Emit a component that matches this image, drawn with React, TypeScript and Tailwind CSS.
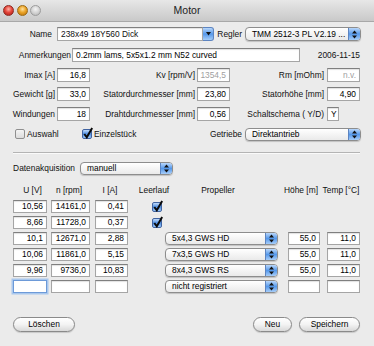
import React from "react";

// Aqua-style controls, sized for the scaled-down window

function Field({
  w,
  value = "",
  left = false,
  disabled = false,
  focus = false,
  h = "h-[14px]",
}: {
  w: string;
  value?: string;
  left?: boolean;
  disabled?: boolean;
  focus?: boolean;
  h?: string;
}) {
  return (
    <div
      className={`${w} ${h} shrink-0 bg-white border flex items-center leading-none whitespace-nowrap overflow-hidden ${
        left ? "justify-start pl-[3px]" : "justify-end pr-[3px]"
      } ${disabled ? "text-[#a0a0a0]" : "text-black"} ${
        focus
          ? "border-[#6d9ad8] shadow-[0_0_0_1.5px_#a9c8ee]"
          : "border-[#a5a5a5] border-t-[#7f7f7f] shadow-[inset_0_1px_1px_rgba(0,0,0,0.12)]"
      }`}
    >
      {value}
    </div>
  );
}

function UpDown() {
  return (
    <svg width="5" height="9" viewBox="0 0 5 9">
      <polygon points="0,3.6 2.5,0.6 5,3.6" fill="#111" />
      <polygon points="0,5.4 2.5,8.4 5,5.4" fill="#111" />
    </svg>
  );
}

function Popup({ w, value, h = "h-[14px]" }: { w: string; value: string; h?: string }) {
  return (
    <div
      className={`${w} ${h} shrink-0 flex items-stretch rounded-[4px] border border-[#8d8d8d] bg-gradient-to-b from-white to-[#eaeaea] shadow-[0_1px_1px_rgba(0,0,0,0.18)] overflow-hidden`}
    >
      <span className="flex-1 flex items-center pl-[6px] leading-none whitespace-nowrap overflow-hidden text-black">
        {value}
      </span>
      <span className="w-[12px] flex items-center justify-center border-l border-[#5d84c0] bg-gradient-to-b from-[#b9d7fa] via-[#5598ea] to-[#a6cdf8]">
        <UpDown />
      </span>
    </div>
  );
}

function Combo({ w, value }: { w: string; value: string }) {
  return (
    <div className={`${w} h-[14px] shrink-0 flex items-stretch`}>
      <div className="flex-1 bg-white border border-[#a5a5a5] border-t-[#7f7f7f] shadow-[inset_0_1px_1px_rgba(0,0,0,0.12)] flex items-center pl-[3px] leading-none whitespace-nowrap overflow-hidden">
        {value}
      </div>
      <div className="w-[11px] flex items-center justify-center rounded-r-[3px] border border-l-0 border-[#5d84c0] bg-gradient-to-b from-[#b9d7fa] via-[#5598ea] to-[#a6cdf8]">
        <svg width="5" height="4" viewBox="0 0 5 4">
          <polygon points="0,0 5,0 2.5,3.6" fill="#111" />
        </svg>
      </div>
    </div>
  );
}

function Check({ checked }: { checked: boolean }) {
  return (
    <span
      className={`relative w-[10px] h-[10px] shrink-0 rounded-[2px] border ${
        checked
          ? "border-[#3f62a0] bg-gradient-to-b from-[#c0dbfa] via-[#4b8ce0] to-[#9cc8f7]"
          : "border-[#8f8f8f] bg-gradient-to-b from-[#f4f4f4] to-[#dcdcdc]"
      }`}
    >
      {checked && (
        <svg
          className="absolute left-[0px] top-[-3px]"
          width="10"
          height="12"
          viewBox="0 0 10 12"
        >
          <path d="M1.3 7 L3.8 10.3 L9.2 1" stroke="#0a0a0a" strokeWidth="2" fill="none" />
        </svg>
      )}
    </span>
  );
}

function Btn({ w, label }: { w: string; label: string }) {
  return (
    <div
      className={`${w} h-[15px] shrink-0 rounded-full border border-[#8a8a8a] bg-gradient-to-b from-white via-[#f3f3f3] to-[#d9d9d9] shadow-[0_1px_1px_rgba(0,0,0,0.15)] flex items-center justify-center leading-none text-black`}
    >
      {label}
    </div>
  );
}

function Light({ color }: { color: string }) {
  return <span className={`w-[11px] h-[11px] rounded-full ${color}`} />;
}

const rows = [
  { u: "10,56", n: "14161,0", i: "0,41", leer: true },
  { u: "8,66", n: "11728,0", i: "0,37", leer: true },
  { u: "10,1", n: "12671,0", i: "2,88", prop: "5x4,3 GWS HD", hoehe: "55,0", temp: "11,0" },
  { u: "10,06", n: "11861,0", i: "5,15", prop: "7x3,5 GWS HD", hoehe: "55,0", temp: "11,0" },
  { u: "9,96", n: "9736,0", i: "10,83", prop: "8x4,3 GWS RS", hoehe: "55,0", temp: "11,0" },
  { u: "", n: "", i: "", prop: "nicht registriert", hoehe: "", temp: "", focus: true },
];

export default function App() {
  return (
    <div className="w-[374px] h-[346px] overflow-hidden bg-[#ebebeb] text-[8.4px] text-[#111] font-['Liberation_Sans',Arial,sans-serif] flex flex-col">
      {/* Title bar */}
      <div className="relative h-[22px] shrink-0 bg-gradient-to-b from-[#e7e7e7] to-[#c9c9c9] border-b border-[#a8a8a8] flex items-center">
        <div className="flex items-center gap-[2.5px] pl-[3px]">
          <Light color="bg-[radial-gradient(circle_at_50%_35%,#ffb3a8_0%,#e5483d_45%,#a5160f_100%)] border border-[#8e2a22]" />
          <Light color="bg-[radial-gradient(circle_at_50%_35%,#ffe2a0_0%,#eba52a_45%,#b76d05_100%)] border border-[#9c6a14]" />
          <Light color="bg-[radial-gradient(circle_at_50%_35%,#f4f4f4_0%,#d4d4d4_50%,#b0b0b0_100%)] border border-[#9c9c9c]" />
        </div>
        <div className="absolute inset-0 flex items-center justify-center text-[10.5px] text-[#222] pointer-events-none">
          Motor
        </div>
      </div>

      {/* Row 1 */}
      <div className="mt-[5px] h-[14px] flex items-center">
        <div className="w-[52px] text-right">Name</div>
        <div className="ml-[5px]">
          <Combo w="w-[157px]" value="238x49 18Y560 Dick" />
        </div>
        <div className="w-[28px] text-right">Regler</div>
        <div className="ml-[3px]">
          <Popup w="w-[116px]" value="TMM 2512-3 PL V2.19 ..." />
        </div>
      </div>

      {/* Row 2 */}
      <div className="mt-[7px] h-[14px] flex items-center">
        <div className="w-[71px] text-right">Anmerkungen</div>
        <div className="ml-[1px]">
          <Field w="w-[228px]" value="0.2mm lams, 5x5x1.2 mm N52 curved" left />
        </div>
        <div className="w-[60px] text-right">2006-11-15</div>
      </div>

      {/* Row 3 */}
      <div className="mt-[6px] h-[14px] flex items-center">
        <div className="w-[55px] text-right">Imax [A]</div>
        <div className="ml-[2px]"><Field w="w-[33px]" value="16,8" /></div>
        <div className="w-[105px] text-right">Kv [rpm/V]</div>
        <div className="ml-[2px]"><Field w="w-[33px]" value="1354,5" disabled /></div>
        <div className="w-[94px] text-right">Rm [mOhm]</div>
        <div className="ml-[3px]"><Field w="w-[33px]" value="n.v." disabled /></div>
      </div>

      {/* Row 4 */}
      <div className="mt-[5px] h-[14px] flex items-center">
        <div className="w-[55px] text-right">Gewicht [g]</div>
        <div className="ml-[2px]"><Field w="w-[33px]" value="33,0" /></div>
        <div className="w-[105px] text-right">Statordurchmesser [mm]</div>
        <div className="ml-[2px]"><Field w="w-[33px]" value="23,80" /></div>
        <div className="w-[94px] text-right">Statorhöhe [mm]</div>
        <div className="ml-[3px]"><Field w="w-[33px]" value="4,90" /></div>
      </div>

      {/* Row 5 */}
      <div className="mt-[6px] h-[14px] flex items-center">
        <div className="w-[55px] text-right">Windungen</div>
        <div className="ml-[2px]"><Field w="w-[33px]" value="18" /></div>
        <div className="w-[105px] text-right">Drahtdurchmesser [mm]</div>
        <div className="ml-[2px]"><Field w="w-[33px]" value="0,56" /></div>
        <div className="w-[94px] text-right">Schaltschema ( Y/D)</div>
        <div className="ml-[3px]"><Field w="w-[12px]" value="Y" left /></div>
      </div>

      {/* Row 6 */}
      <div className="mt-[7px] h-[13px] flex items-center">
        <div className="w-[82px] pl-[15px] flex items-center gap-[2px]">
          <Check checked={false} />
          <span>Auswahl</span>
        </div>
        <div className="w-[114px] flex items-center gap-[2px]">
          <Check checked />
          <span>Einzelstück</span>
        </div>
        <div className="w-[46px] text-right">Getriebe</div>
        <div className="ml-[3px]">
          <Popup w="w-[116px]" h="h-[13px]" value="Direktantrieb" />
        </div>
      </div>

      {/* Separator */}
      <div className="mt-[11px] ml-[13px] w-[347px] h-[2px] border-t border-[#b4b4b4] border-b border-b-[#fafafa]" />

      {/* Datenakquisition */}
      <div className="mt-[7px] h-[14px] flex items-center">
        <div className="w-[75px] text-right">Datenakquisition</div>
        <div className="ml-[5px]">
          <Popup w="w-[93px]" h="h-[13px]" value="manuell" />
        </div>
      </div>

      {/* Column headers */}
      <div className="mt-[10px] h-[10px] flex items-center leading-none">
        <div className="ml-[20px] w-[25px] text-center whitespace-nowrap">U [V]</div>
        <div className="w-[48px] text-center whitespace-nowrap">n [rpm]</div>
        <div className="w-[34px] text-center whitespace-nowrap">I [A]</div>
        <div className="w-[54px] text-center whitespace-nowrap">Leerlauf</div>
        <div className="w-[74px] text-center whitespace-nowrap">Propeller</div>
        <div className="ml-[26px] w-[40px] text-center whitespace-nowrap">Höhe [m]</div>
        <div className="w-[40px] text-center whitespace-nowrap">Temp [°C]</div>
      </div>

      {/* Data rows */}
      <div className="mt-[5px] flex flex-col gap-[3px]">
        {rows.map((r, idx) => (
          <div key={idx} className="h-[13px] flex items-center pl-[13px]">
            <Field w="w-[34px]" h="h-[13px]" value={r.u} focus={r.focus} />
            <div className="ml-[4px]"><Field w="w-[39px]" h="h-[13px]" value={r.n} /></div>
            <div className="ml-[5px]"><Field w="w-[33px]" h="h-[13px]" value={r.i} /></div>
            <div className="ml-[24px] w-[10px] flex items-center">
              {r.leer && <Check checked />}
            </div>
            {r.prop !== undefined && (
              <>
                <div className="ml-[3px]">
                  <Popup w="w-[113px]" h="h-[13px]" value={r.prop} />
                </div>
                <div className="ml-[10px]"><Field w="w-[32px]" h="h-[13px]" value={r.hoehe} /></div>
                <div className="ml-[7px]"><Field w="w-[33px]" h="h-[13px]" value={r.temp} /></div>
              </>
            )}
          </div>
        ))}
      </div>

      {/* Buttons */}
      <div className="mt-[24px] h-[15px] flex items-center pl-[13px] pr-[14px]">
        <Btn w="w-[62px]" label="Löschen" />
        <div className="ml-auto flex items-center gap-[7px]">
          <Btn w="w-[39px]" label="Neu" />
          <Btn w="w-[61px]" label="Speichern" />
        </div>
      </div>
    </div>
  );
}
